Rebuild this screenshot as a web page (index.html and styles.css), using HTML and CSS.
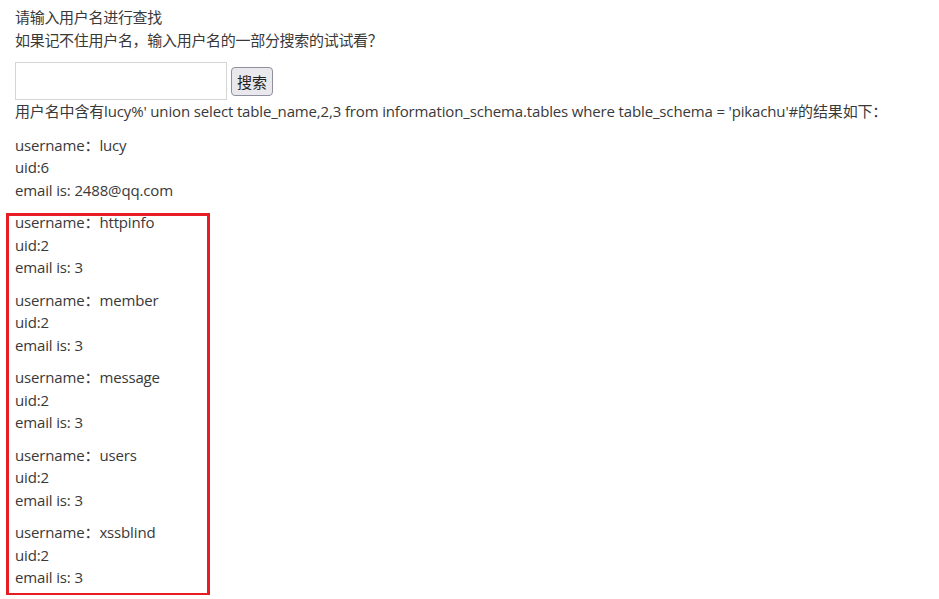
FILE: index.html
```html
<!DOCTYPE html>
<html lang="zh-CN">
<head>
    <meta charset="UTF-8">
    <title>sql注入 - 搜索型</title>
    <link rel="stylesheet" href="styles.css">
</head>
<body>
    <div class="page">
        <div class="search-form">
            <p class="tip">请输入用户名进行查找<br>如果记不住用户名，输入用户名的一部分搜索的试试看？</p>
            <form class="form-row">
                <input type="text" name="name" class="name-input">
                <button type="button" class="submit-btn">搜索</button>
            </form>
        </div>
        <p class="result-title">用户名中含有lucy%' union select table_name,2,3 from information_schema.tables where table_schema = 'pikachu'#的结果如下：</p>

        <p class="record">username：lucy<br>uid:6<br>email is: 2488@qq.com</p>

        <div class="highlight">
            <p class="record">username：httpinfo<br>uid:2<br>email is: 3</p>
            <p class="record">username：member<br>uid:2<br>email is: 3</p>
            <p class="record">username：message<br>uid:2<br>email is: 3</p>
            <p class="record">username：users<br>uid:2<br>email is: 3</p>
            <p class="record">username：xssblind<br>uid:2<br>email is: 3</p>
        </div>
    </div>
</body>
</html>
```

FILE: styles.css
```css
body {
    margin: 0;
    padding: 0;
    background-color: #fff;
    color: #393939;
    font-family: "Open Sans", "Noto Sans CJK SC", sans-serif;
    font-size: 15px;
    line-height: 1.5;
    letter-spacing: -0.15px;
}

.page {
    padding: 6px 15px;
}

p {
    margin: 0;
}

.tip {
    letter-spacing: -0.3px;
}

.form-row {
    display: flex;
    align-items: center;
    gap: 4px;
    margin: 11px 0 0 0;
}

.name-input {
    width: 212px;
    height: 38px;
    box-sizing: border-box;
    border: 1px solid #d5d5d5;
    padding: 5px;
    font-size: 14px;
}

.submit-btn {
    height: 29px;
    padding: 0 5px;
    font-family: "Noto Sans CJK SC", sans-serif;
    font-size: 15px;
    color: #222;
    background-color: #e9e9ed;
    border: 1px solid #8f8f9d;
    border-radius: 4px;
}

.result-title {
    margin: 0 0 11px 0;
}

.record {
    margin-bottom: 10px;
}

/* red frame drawn over the injected rows */
.highlight {
    position: relative;
}

.highlight::before {
    content: "";
    position: absolute;
    top: 2px;
    bottom: -7px;
    left: -9px;
    width: 198px;
    border: 3px solid #e81c24;
}

.highlight .record:last-child {
    margin-bottom: 0;
}
```
